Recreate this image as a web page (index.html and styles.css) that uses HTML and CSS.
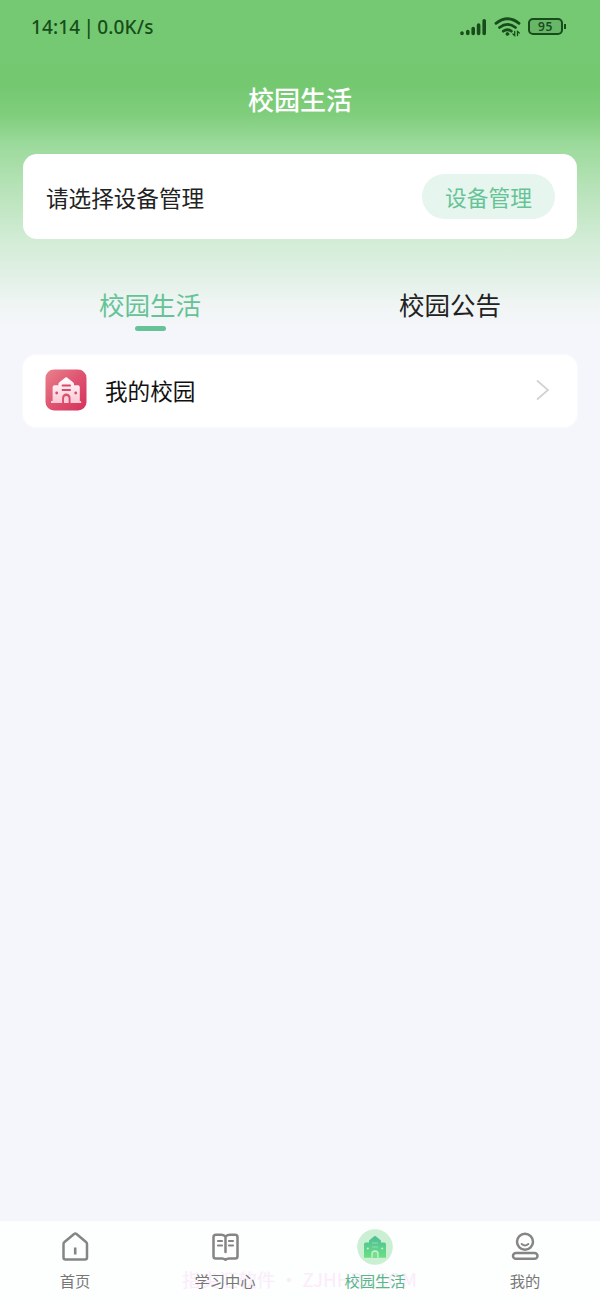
FILE: index.html
```html
<!DOCTYPE html>
<html lang="zh-CN">
<head>
<meta charset="utf-8">
<title>校园生活</title>
<link rel="stylesheet" href="styles.css">
</head>
<body>
<div class="app">
  <div class="status">
    <span class="status-time">14:14 | 0.0K/s</span>
    <div class="status-icons">
      <svg width="28" height="20" viewBox="0 0 28 20" fill="none" stroke="currentColor" stroke-width="3.600" stroke-linecap="round"><path d="M3 16v.4M8.800 14.500v1.900M14.200 11.500v4.900M19.600 8v8.400M25.200 3.700v12.700"/></svg>
      <svg width="28" height="20" viewBox="0 0 28 20" fill="none" stroke="currentColor" stroke-width="2.800" stroke-linecap="round"><path d="M2 6.300Q13.500-2.900 25 6.300M5.500 10.500q8-6.300 16 0M9.300 14.200q4.200-3 8 0"/><circle cx="13.400" cy="17" r="1.400" fill="currentColor" stroke-width="1"/><path d="M20.700 14.500v4l-1.800-1.500M23.500 18.500v-4l1.800 1.500" stroke-width="1.300"/></svg>
      <div class="battery"><span>95</span></div>
    </div>
  </div>
  <h1 class="title">校园生活</h1>
  <section class="card device">
    <span class="device-label">请选择设备管理</span>
    <button class="pill">设备管理</button>
  </section>
  <nav class="tabs">
    <a class="tab tab-on">校园生活</a>
    <a class="tab">校园公告</a>
  </nav>
  <section class="card row">
    <svg class="row-icon" width="42" height="42" viewBox="0 0 42 42">
      <defs>
        <linearGradient id="red" x1="0" y1="0" x2="1" y2="1"><stop offset="0" stop-color="#e9828c"/><stop offset=".5" stop-color="#df5471"/><stop offset="1" stop-color="#d5305c"/></linearGradient>
        <linearGradient id="pale" x1="0" y1="0" x2="0" y2="1"><stop offset="0" stop-color="#fff"/><stop offset="1" stop-color="#fbc8d4"/></linearGradient>
      </defs>
      <rect x=".5" y=".5" width="41" height="41" rx="8.500" fill="url(#red)"/>
      <path fill="url(#pale)" d="M20.400 8.500a1.500 1.500 0 0 1 1.600 0l6.300 5q.7.600.7 1.500v1.300h3.800q2 0 2 2V32h.7q.8 0 .8 2H25.500v-5.200a4.200 4.200 0 0 0-8.400 0V34H6V32h1.600V18.300q0-2 2-2h3.800V15q0-.9.700-1.500z"/>
      <path fill="#fbd0da" d="M19 34v-4.700a2.300 2.300 0 0 1 4.600 0V34z"/>
      <path d="M17.500 16.500h7.600M17.500 21h7.600" stroke="#d94a69" stroke-width="1.800" stroke-linecap="round"/>
      <circle cx="11.700" cy="24" r="1.400" fill="#d94a69"/><circle cx="30.700" cy="24" r="1.400" fill="#d94a69"/>
    </svg>
    <span class="row-label">我的校园</span>
    <svg width="14" height="22" viewBox="0 0 14 22" fill="none" stroke="#d2d2d5" stroke-width="1.700"><path d="M1 1.500 12 11 1 20.500"/></svg>
  </section>
  <nav class="bottom">
    <div class="watermark">指尖汇软件 · ZJHHRJ.COM</div>
    <a class="item">
      <svg width="36" height="36" viewBox="0 0 36 36" fill="none" stroke="#858585" stroke-width="2.500" stroke-linejoin="round"><path d="M7.500 13q-1 .8-1 2V28.500q0 2 2 2h19.500q2 0 2-2V15q0-1.200-1-2l-9.500-8q-1.200-.9-2.400 0z"/><path d="M18.200 18.500v7" stroke-width="2.600"/></svg>
      <span>首页</span>
    </a>
    <a class="item">
      <svg width="36" height="36" viewBox="0 0 36 36" fill="none" stroke="#858585" stroke-width="2.500" stroke-linejoin="round" stroke-linecap="round"><path d="M18.500 7.500Q16.500 5.700 14 5.700H9q-2.500 0-2.500 2.500v19q0 2.300 2.300 2.300H15q2 0 3.500 1.300 1.500-1.300 3.500-1.300h6.200q2.300 0 2.300-2.300v-19q0-2.500-2.500-2.500h-5q-2.500 0-4.500 1.800V23"/><path d="M11 12h4M11 16.500h4M22 12h4M22 16.500h4" stroke-width="2.200"/></svg>
      <span>学习中心</span>
    </a>
    <a class="item item-on">
      <svg width="36" height="36" viewBox="0 0 36 36">
        <defs><linearGradient id="green" x1="0" y1="0" x2="0" y2="1"><stop offset="0" stop-color="#4ebd96"/><stop offset="1" stop-color="#69e083"/></linearGradient></defs>
        <circle cx="18" cy="18" r="17.800" fill="#cbefd3"/>
        <path fill="url(#green)" d="M17.200 7.300q.8-.6 1.600 0l5.200 4.200v2h3.200q1.800 0 1.800 1.800v13.500H7V15.300q0-1.800 1.800-1.800H12v-2z"/>
        <path d="M15 28.800V25a3 3 0 0 1 6 0v3.800" fill="#79dd91" stroke="#c9f3d0" stroke-width="1.300"/>
        <path d="M15 14h6M15 18h6" stroke="#8fdcb6" stroke-width="1.200"/>
        <circle cx="10.800" cy="19.500" r="1" fill="#c9f3d0"/><circle cx="25.200" cy="19.500" r="1" fill="#c9f3d0"/>
      </svg>
      <span>校园生活</span>
    </a>
    <a class="item">
      <svg width="36" height="36" viewBox="0 0 36 36" fill="none" stroke="#858585" stroke-width="2.500" stroke-linecap="round"><circle cx="18" cy="12.800" r="8"/><path d="M14.700 15q3.300 3 6.600 0" stroke-width="2"/><rect x="6" y="24" width="24.500" height="5.800" rx="2.900"/></svg>
      <span>我的</span>
    </a>
  </nav>
</div>
</body>
</html>
```
FILE: styles.css
```css
* { box-sizing: border-box; }
body { margin: 0; font-family: "Noto Sans CJK SC", sans-serif; }
.app {
  height: 1301px;
  display: flex;
  flex-direction: column;
  background: linear-gradient(#75c973 0, #74c870 85px, #80ce7d 115px, #9cda9c 145px, #b5e2b6 185px, #d2ecd6 240px, #e3f1e8 280px, #f0f5f4 305px, #f5f6fb 330px, #f5f6fb 100%);
}
.status {
  height: 54px;
  padding: 0 34px 0 31px;
  display: flex;
  align-items: center;
  justify-content: space-between;
  color: #174d1b;
}
.status-time { font: 500 19px/54px "Noto Sans", sans-serif; letter-spacing: .15px; word-spacing: -2px; }
.status-icons { display: flex; align-items: center; gap: 7px; }
.status-icons svg { display: block; }
.battery {
  width: 35px;
  height: 17px;
  border: 2px solid currentColor;
  border-radius: 5px;
  position: relative;
  margin: -2px 3px 0 -1px;
  background: #68b668;
  text-align: center;
  font: 600 12px/13px "Noto Sans", sans-serif;
  letter-spacing: .6px;
}
.battery::after {
  content: "";
  position: absolute;
  right: -5px;
  top: 4px;
  width: 2px;
  height: 5px;
  background: currentColor;
}
.title {
  margin: 25px 0 0;
  height: 40px;
  line-height: 40px;
  text-align: center;
  font-size: 26px;
  font-weight: 500;
  color: #fff;
}
.card {
  margin: 0 23px;
  background: #fff;
  display: flex;
  align-items: center;
}
.device {
  margin-top: 35px;
  height: 85px;
  padding: 0 22px 0 23px;
  border-radius: 14px;
  justify-content: space-between;
  font-size: 22.6px;
  color: #222;
}
.device-label { padding-top: 1px; }
.pill {
  width: 133px;
  height: 45px;
  padding: 0;
  border: 0;
  border-radius: 23px;
  background: #e6f5ed;
  color: #65c397;
  font: 400 21.7px/45px "Noto Sans CJK SC", sans-serif;
}
.tabs { display: flex; margin-top: 45px; height: 71px; }
.tab {
  flex: 1;
  display: flex;
  flex-direction: column;
  align-items: center;
  font-size: 25.5px;
  line-height: 40px;
  color: #222;
}
.tab-on { color: #65c397; }
.tab-on::after {
  content: "";
  width: 31px;
  height: 5px;
  margin-top: 2px;
  border-radius: 3px;
  background: #65c397;
}
.row { height: 72px; padding: 0 27px 2px 22px; border-radius: 13px; box-shadow: 0 0 3px #fff; }
.row-label { flex: 1; margin-left: 18px; font-size: 22.6px; font-weight: 400; color: #111; }
.bottom {
  margin-top: auto;
  height: 80px;
  display: flex;
  position: relative;
  background: #fdfefe;
}
.item {
  flex: 1;
  display: flex;
  flex-direction: column;
  align-items: center;
  padding-top: 8px;
  font-size: 15.3px;
  line-height: 22px;
  color: #777;
  position: relative;
}
.item span { margin-top: 4px; }
.item-on { color: #58b78a; }
.watermark {
  position: absolute;
  left: 182px;
  top: 44px;
  font-size: 18.7px;
  line-height: 28px;
  color: #fbebfb;
  white-space: nowrap;
}
```
